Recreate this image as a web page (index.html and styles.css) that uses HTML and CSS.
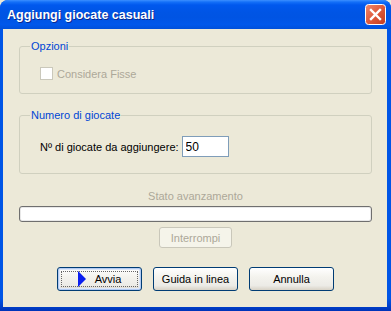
FILE: index.html
```html
<!DOCTYPE html>
<html lang="it">
<head>
    <meta charset="UTF-8">
    <title>Aggiungi giocate casuali</title>
    <link rel="stylesheet" href="styles.css">
</head>
<body>
    <div class="window">
        <div class="titlebar">
            <span class="title">Aggiungi giocate casuali</span>
            <button class="close" title="Chiudi">
                <svg width="21" height="21" viewBox="0 0 21 21">
                    <defs>
                        <linearGradient id="red" x1="0" y1="0" x2="1" y2="1">
                            <stop offset="0" stop-color="#EE8A70"/>
                            <stop offset="0.5" stop-color="#DF5A3C"/>
                            <stop offset="1" stop-color="#C43C1E"/>
                        </linearGradient>
                    </defs>
                    <rect x="0.5" y="0.5" width="20" height="20" rx="3" fill="url(#red)" stroke="#fff"/>
                    <path d="M6 6 L15 15 M15 6 L6 15" stroke="#fff" stroke-width="2.4" stroke-linecap="square"/>
                </svg>
            </button>
        </div>

        <div class="client">
            <!-- Opzioni -->
            <fieldset class="group group-options">
                <legend>Opzioni</legend>
                <div class="group-body">
                    <label class="check disabled">
                        <input type="checkbox" disabled>
                        Considera Fisse
                    </label>
                </div>
            </fieldset>

            <!-- Numero di giocate -->
            <fieldset class="group group-count">
                <legend>Numero di giocate</legend>
                <div class="group-body row">
                    <label for="numGiocate">Nº di giocate da aggiungere:</label>
                    <input type="text" id="numGiocate" class="textbox" value="50">
                </div>
            </fieldset>

            <div class="status-label">Stato avanzamento</div>
            <div class="progress"><div class="progress-fill"></div></div>
            <button class="btn btn-stop" disabled>Interrompi</button>

            <div class="actions">
                <button class="btn btn-default">
                    <span class="focus">
                        <svg width="8" height="16" viewBox="0 0 8 16"><polygon points="0,0 8,8 0,16" fill="#0A1EF0"/></svg>
                        <span>Avvia</span>
                    </span>
                </button>
                <button class="btn">Guida in linea</button>
                <button class="btn">Annulla</button>
            </div>
        </div>
    </div>
</body>
</html>
```

FILE: styles.css
```css
html, body {
    margin: 0;
    padding: 0;
    background: #ECE9D8;
}
.window {
    width: 391px;
    height: 311px;
    display: flex;
    flex-direction: column;
    background: linear-gradient(to bottom, #0055E6 0, #0055E6 96%, #0033B8 100%);
    border-radius: 8px 8px 0 0;
    overflow: hidden;
    font-family: "Liberation Sans", Arial, sans-serif;
    font-size: 11px;
    color: #000;
}
.titlebar {
    height: 29px;
    flex: none;
    display: flex;
    align-items: center;
    padding: 0 5px 0 7px;
    box-sizing: border-box;
    background: linear-gradient(to bottom, #3C8FFF 0, #1470F8 2px, #0058EE 5px, #0055E5 12px, #0054E3 60%, #0058EB 85%, #0050DA 100%);
}
.title {
    color: #fff;
    font-weight: bold;
    font-size: 12.5px;
    text-shadow: 1px 1px #0B2A8F;
    padding-top: 1px;
}
.close {
    margin-left: auto;
    width: 21px;
    height: 21px;
    padding: 0;
    border: none;
    background: none;
    display: block;
}
.close svg {
    display: block;
}
.client {
    flex: 1;
    margin: 0 4px 4px 3px;
    background: #ECE9D8;
    padding: 10px 15px 0 16px;
    display: flex;
    flex-direction: column;
}
.group {
    margin: 0;
    padding: 0 0 0 10px;
    border: 1px solid #D0D0BF;
    border-radius: 3px;
    box-sizing: border-box;
}
.group legend {
    color: #0046D5;
    padding: 0 1px;
    line-height: 14px;
}
.group-options {
    height: 55px;
}
.group-count {
    height: 66px;
    margin-top: 14px;
}
.group-body {
    padding-left: 10px;
}
.check {
    display: flex;
    align-items: center;
    margin-top: 14px;
    height: 13px;
}
.check input {
    appearance: none;
    -webkit-appearance: none;
    width: 13px;
    height: 13px;
    margin: 0 4px 0 0;
    border: 1px solid #CAC8BB;
    background: #fff;
}
.disabled {
    color: #ACA899;
}
.row {
    display: flex;
    align-items: center;
    margin-top: 14px;
}
.row label {
    margin-right: 3px;
}
.textbox {
    width: 47px;
    height: 21px;
    box-sizing: border-box;
    border: 1px solid #7F9DB9;
    padding: 0 3px;
    font-family: inherit;
    font-size: 12px;
    background: #fff;
    outline: none;
}
.status-label {
    margin-top: 16px;
    text-align: center;
    color: #ACA899;
    line-height: 13px;
}
.progress {
    margin-top: 3px;
    height: 16px;
    box-sizing: border-box;
    border: 1px solid #6F6F6F;
    border-radius: 3px;
    background: #fff;
    box-shadow: inset 0 0 0 1px #E8E8E8;
}
.btn {
    font-family: inherit;
    font-size: 11px;
    color: #000;
    height: 24px;
    width: 85px;
    padding: 0;
    box-sizing: border-box;
    border: 1px solid #003C74;
    border-radius: 3px;
    background: linear-gradient(to bottom, #FFFFFF 0, #F4F3EE 40%, #ECEBE6 80%, #D8D2C6 100%);
}
.btn-stop {
    align-self: center;
    margin-top: 5px;
    width: 73px;
    height: 21px;
    border-color: #C9C7BA;
    background: #F5F4EA;
    color: #ACA899;
}
.actions {
    margin-top: 19px;
    display: flex;
    justify-content: center;
    gap: 11px;
}
.btn-default {
    box-shadow: inset 0 0 0 1px #B2CAF2, inset 0 0 0 2px #DCE7FA;
    padding: 3px;
}
.focus {
    display: flex;
    align-items: center;
    justify-content: center;
    gap: 9px;
    height: 100%;
    border: 1px dotted #666;
    box-sizing: border-box;
}
.focus svg {
    display: block;
}
```
